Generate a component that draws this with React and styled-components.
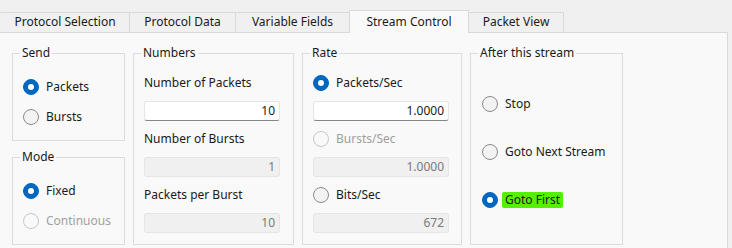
import React from 'react';
import styled, { createGlobalStyle } from 'styled-components';

const GlobalStyle = createGlobalStyle`
  body {
    margin: 0;
    background: #f0f0f0;
    font-family: 'Noto Sans', 'Open Sans', sans-serif;
    font-size: 12px;
    color: #1a1a1a;
  }
`;

const Window = styled.div`
  width: 732px;
  height: 248px;
  overflow: hidden;
`;

const TabBar = styled.div`
  display: flex;
  align-items: flex-end;
  height: 32px;
`;

const Tab = styled.div`
  position: relative;
  z-index: ${p => (p.$active ? 2 : 1)};
  box-sizing: border-box;
  width: ${p => p.$w}px;
  height: ${p => (p.$active ? 23 : 20)}px;
  margin-left: ${p => (p.$first ? 0 : -1)}px;
  margin-bottom: ${p => (p.$active ? -1 : 0)}px;
  padding-top: ${p => (p.$active ? 3 : 1)}px;
  border: 1px solid #d9d9d9;
  border-bottom: none;
  border-left-color: ${p => (p.$first ? 'transparent' : '#d9d9d9')};
  background: ${p => (p.$active ? '#f9f9f9' : '#f0f0f0')};
  text-align: center;
  line-height: 16px;
  white-space: nowrap;
`;

const Panel = styled.div`
  box-sizing: border-box;
  width: 728px;
  height: 240px;
  border-top: 1px solid #d9d9d9;
  border-right: 1px solid #d9d9d9;
  background: #f9f9f9;
  display: flex;
  align-items: flex-start;
  gap: 8px;
  padding: 20px 0 0 12px;
`;

const Column = styled.div`
  display: flex;
  flex-direction: column;
  gap: 16px;
`;

const Group = styled.div`
  position: relative;
  box-sizing: border-box;
  width: ${p => p.$w}px;
  height: ${p => p.$h}px;
  border: 1px solid #dcdcdc;
  padding: ${p => p.$pad};
  display: flex;
  flex-direction: column;
  gap: ${p => p.$gap}px;
`;

const GroupTitle = styled.span`
  position: absolute;
  top: -9px;
  left: 7px;
  padding: 0 2px;
  background: #f9f9f9;
  line-height: 16px;
  white-space: nowrap;
`;

const RadioRow = styled.label`
  display: flex;
  align-items: center;
  gap: 7px;
  height: 16px;
  line-height: 16px;
  white-space: nowrap;
  color: ${p => (p.$disabled ? '#a0a0a0' : '#1a1a1a')};
`;

const RadioDot = styled.span`
  box-sizing: border-box;
  flex: none;
  width: 16px;
  height: 16px;
  border-radius: 50%;
  display: flex;
  align-items: center;
  justify-content: center;
  border: 1px solid
    ${p => (p.$checked ? '#0067c0' : p.$disabled ? '#c6c6c6' : '#8a8a8a')};
  background: ${p => (p.$checked ? '#0067c0' : p.$disabled ? '#f9f9f9' : '#f3f3f3')};

  &::after {
    content: '';
    display: ${p => (p.$checked ? 'block' : 'none')};
    width: 6px;
    height: 6px;
    border-radius: 50%;
    background: #fff;
  }
`;

const RadioText = styled.span`
  padding: ${p => (p.$highlight ? '0 3px' : '0')};
  margin-left: ${p => (p.$highlight ? -3 : 0)}px;
  background: ${p => (p.$highlight ? '#55f000' : 'transparent')};
  border-radius: 2px;
`;

const FieldLabel = styled.div`
  height: 16px;
  line-height: 16px;
  white-space: nowrap;
`;

const NumberBox = styled.div`
  box-sizing: border-box;
  width: 136px;
  height: 20px;
  border: 1px solid #e5e5e5;
  border-bottom-color: ${p => (p.$disabled ? '#e5e5e5' : '#868686')};
  border-radius: 3px;
  background: ${p => (p.$disabled ? '#f0f0f0' : '#ffffff')};
  color: ${p => (p.$disabled ? '#7a7a7a' : '#1a1a1a')};
  text-align: right;
  padding-right: 4px;
  line-height: 18px;
`;

const Radio = ({ checked, disabled, highlight, children }) => (
  <RadioRow $disabled={disabled}>
    <RadioDot $checked={checked} $disabled={disabled} />
    <RadioText $highlight={highlight}>{children}</RadioText>
  </RadioRow>
);

const tabs = [
  { name: 'Protocol Selection', w: 130 },
  { name: 'Protocol Data', w: 107 },
  { name: 'Variable Fields', w: 115 },
  { name: 'Stream Control', w: 120, active: true },
  { name: 'Packet View', w: 96 },
];

export default function App() {
  return (
    <Window>
      <GlobalStyle />
      <TabBar>
        {tabs.map((t, i) => (
          <Tab key={t.name} $w={t.w} $first={i === 0} $active={t.active}>
            {t.name}
          </Tab>
        ))}
      </TabBar>
      <Panel>
        <Column>
          <Group $w={113} $h={88} $pad="25px 0 0 10px" $gap={14}>
            <GroupTitle>Send</GroupTitle>
            <Radio checked>Packets</Radio>
            <Radio>Bursts</Radio>
          </Group>
          <Group $w={113} $h={88} $pad="25px 0 0 10px" $gap={14}>
            <GroupTitle>Mode</GroupTitle>
            <Radio checked>Fixed</Radio>
            <Radio disabled>Continuous</Radio>
          </Group>
        </Column>
        <Group $w={161} $h={192} $pad="21px 0 0 10px" $gap={10}>
          <GroupTitle>Numbers</GroupTitle>
          <FieldLabel>Number of Packets</FieldLabel>
          <NumberBox>10</NumberBox>
          <FieldLabel>Number of Bursts</FieldLabel>
          <NumberBox $disabled>1</NumberBox>
          <FieldLabel>Packets per Burst</FieldLabel>
          <NumberBox $disabled>10</NumberBox>
        </Group>
        <Group $w={160} $h={192} $pad="21px 0 0 10px" $gap={10}>
          <GroupTitle>Rate</GroupTitle>
          <Radio checked>Packets/Sec</Radio>
          <NumberBox>1.0000</NumberBox>
          <Radio disabled>Bursts/Sec</Radio>
          <NumberBox $disabled>1.0000</NumberBox>
          <Radio>Bits/Sec</Radio>
          <NumberBox $disabled>672</NumberBox>
        </Group>
        <Group $w={153} $h={192} $pad="42px 0 0 11px" $gap={32}>
          <GroupTitle>After this stream</GroupTitle>
          <Radio>Stop</Radio>
          <Radio>Goto Next Stream</Radio>
          <Radio checked highlight>Goto First</Radio>
        </Group>
      </Panel>
    </Window>
  );
}
